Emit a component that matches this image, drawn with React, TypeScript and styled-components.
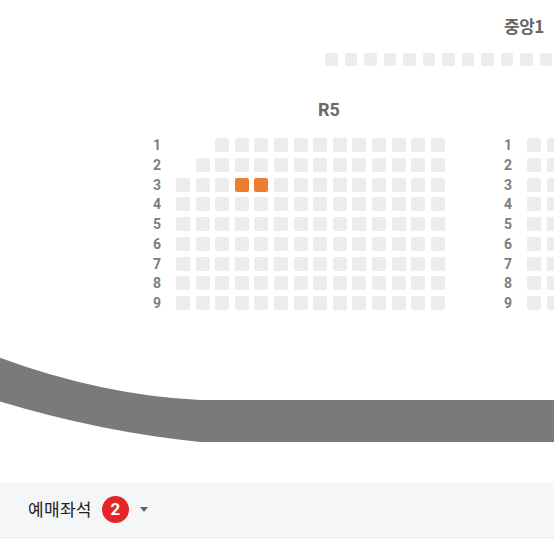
import React from "react";
import styled, { createGlobalStyle } from "styled-components";

const Global = createGlobalStyle`
  html, body { margin: 0; padding: 0; background: #ffffff; }
  body { font-family: "Noto Sans CJK KR", "Noto Sans", Roboto, sans-serif; }
`;

const Page = styled.div`
  width: 554px;
  height: 554px;
  overflow: hidden;
  display: flex;
  flex-direction: column;
  background: #ffffff;
`;

const MapCanvas = styled.div`
  position: relative;
  height: 482px;
  flex: none;
`;

const MapItem = styled.div<{ $x: number; $y: number }>`
  position: absolute;
  left: ${(p) => p.$x}px;
  top: ${(p) => p.$y}px;
`;

const ZoneTitle = styled.div`
  font-family: "Noto Sans CJK KR", sans-serif;
  font-weight: 700;
  font-size: 17px;
  line-height: 20px;
  color: #666666;
  letter-spacing: -0.5px;
`;

const SectionTitle = styled.div`
  font-family: Roboto, "Noto Sans", sans-serif;
  font-weight: 700;
  font-size: 18px;
  line-height: 20px;
  color: #6a6a6a;
`;

const SeatLine = styled.div<{ $gap: number }>`
  display: flex;
  gap: ${(p) => p.$gap}px;
`;

const Seat = styled.div<{ $size: number; $state?: "free" | "picked" | "none" }>`
  width: ${(p) => p.$size}px;
  height: ${(p) => p.$size}px;
  border-radius: 2px;
  flex: none;
  background: ${(p) =>
    p.$state === "picked" ? "#ee7d2f" : p.$state === "none" ? "transparent" : "#ececec"};
`;

const Block = styled.div`
  display: flex;
  flex-direction: column;
  gap: 5.75px;
`;

const BlockRow = styled.div`
  display: flex;
  align-items: center;
`;

const RowLabel = styled.div`
  width: 16px;
  margin-right: 11px;
  text-align: center;
  font-family: Roboto, sans-serif;
  font-weight: 700;
  font-size: 14px;
  line-height: 14px;
  color: #7e7e7e;
`;

const StageSvg = styled.svg`
  position: absolute;
  left: 0;
  top: 340px;
  display: block;
`;

const Bar = styled.div`
  height: 55px;
  flex: none;
  background: #f5f6f8;
  border-bottom: 1px solid #e9eaed;
  display: flex;
  align-items: center;
  padding-left: 28px;
`;

const BarLabel = styled.span`
  font-family: "Noto Sans CJK KR", sans-serif;
  font-size: 17px;
  color: #222222;
  letter-spacing: 0.3px;
  margin-top: -2px;
`;

const Badge = styled.span`
  width: 27px;
  height: 27px;
  border-radius: 50%;
  background: #e4262b;
  color: #ffffff;
  display: flex;
  align-items: center;
  justify-content: center;
  font-family: Roboto, sans-serif;
  font-weight: 700;
  font-size: 17px;
  margin-left: 10px;
  margin-top: -1px;
`;

const Caret = styled.span`
  width: 0;
  height: 0;
  border-left: 4.5px solid transparent;
  border-right: 4.5px solid transparent;
  border-top: 5px solid #666666;
  margin-left: 11px;
`;

type Row = { n: number; skip: number; picked?: number[] };

const leftRows: Row[] = [
  { n: 1, skip: 2 },
  { n: 2, skip: 1 },
  { n: 3, skip: 0, picked: [3, 4] },
  { n: 4, skip: 0 },
  { n: 5, skip: 0 },
  { n: 6, skip: 0 },
  { n: 7, skip: 0 },
  { n: 8, skip: 0 },
  { n: 9, skip: 0 },
];

const SeatBlock: React.FC<{ rows: Row[]; cols: number }> = ({ rows, cols }) => (
  <Block>
    {rows.map((r) => (
      <BlockRow key={r.n}>
        <RowLabel>{r.n}</RowLabel>
        <SeatLine $gap={5.6}>
          {Array.from({ length: cols }).map((_, i) => (
            <Seat
              key={i}
              $size={14}
              $state={i < r.skip ? "none" : r.picked?.includes(i) ? "picked" : "free"}
            />
          ))}
        </SeatLine>
      </BlockRow>
    ))}
  </Block>
);

const rightRows: Row[] = [1, 2, 3, 4, 5, 6, 7, 8, 9].map((n) => ({ n, skip: 0 }));

export default function App() {
  return (
    <Page>
      <Global />
      <MapCanvas>
        <MapItem $x={504} $y={16}>
          <ZoneTitle>중앙1</ZoneTitle>
        </MapItem>
        <MapItem $x={325} $y={53}>
          <SeatLine $gap={7}>
            {Array.from({ length: 12 }).map((_, i) => (
              <Seat key={i} $size={12.5} />
            ))}
          </SeatLine>
        </MapItem>
        <MapItem $x={318} $y={100}>
          <SectionTitle>R5</SectionTitle>
        </MapItem>
        <MapItem $x={149} $y={138}>
          <SeatBlock rows={leftRows} cols={14} />
        </MapItem>
        <MapItem $x={500} $y={138}>
          <SeatBlock rows={rightRows} cols={3} />
        </MapItem>
        <StageSvg width={554} height={110} viewBox="0 340 554 110">
          <path
            d="M -2 357 Q 100 395 200 400 L 556 400 L 556 442 L 200 442 Q 100 432 -2 401 Z"
            fill="#7a7a7a"
          />
        </StageSvg>
      </MapCanvas>
      <Bar>
        <BarLabel>예매좌석</BarLabel>
        <Badge>2</Badge>
        <Caret />
      </Bar>
    </Page>
  );
}
